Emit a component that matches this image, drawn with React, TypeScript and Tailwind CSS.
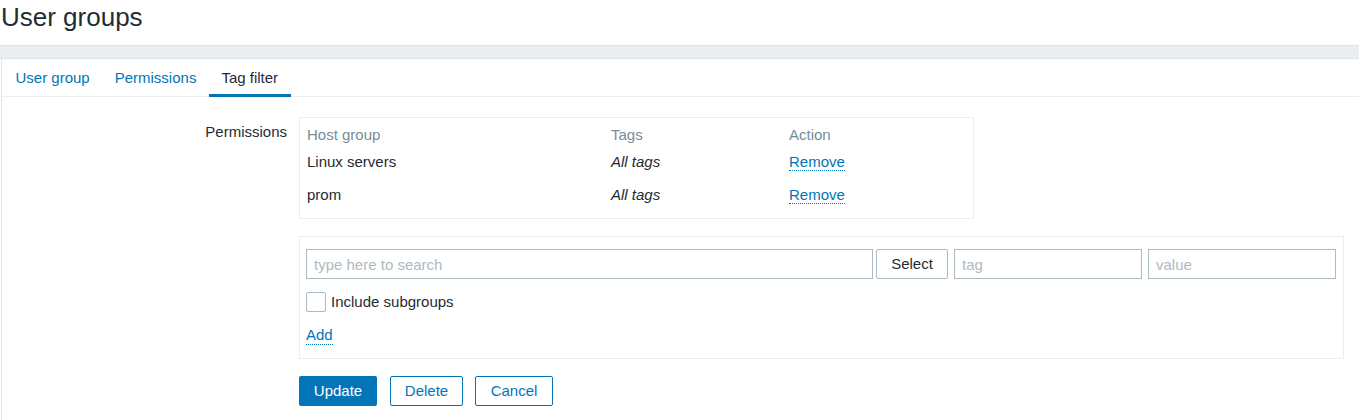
/** User groups: tag filter tab. */

import { useState } from 'react';

const tabs = ['User group', 'Permissions', 'Tag filter'];

const rows = [
  { group: 'Linux servers', tags: 'All tags' },
  { group: 'prom', tags: 'All tags' },
];

function DottedLink({ children }: { children: string }) {
  return (
    <a
      href="#"
      className="text-[#0275b8] border-b border-dotted border-[#0275b8] leading-[18px]"
      onClick={(e) => e.preventDefault()}
    >
      {children}
    </a>
  );
}

export default function App() {
  const [active, setActive] = useState(2);
  const [subgroups, setSubgroups] = useState(false);

  return (
    <div className="min-h-screen bg-white text-[15px] text-[#1f2c33] font-['Liberation_Sans',Arial,sans-serif]">
      <div className="h-[45px]">
        <h1 className="pl-[1px] text-[26px] leading-[34px] font-normal">User groups</h1>
      </div>
      <div className="h-[14px] bg-[#ebeef0] border-y border-[#dfe4e7]" />

      <div className="ml-[1px] border-l border-[#dfe4e7] pb-10">
        <ul className="flex h-[38px] border-b border-[#ebeef0] pl-[1px]">
          {tabs.map((tab, i) => (
            <li
              key={tab}
              onClick={() => setActive(i)}
              className={
                i === active
                  ? 'px-[12.5px] -mb-px flex items-center border-b-[3px] border-[#0275b8] pt-[3px] text-[#1f2c33] cursor-default'
                  : 'px-[12.5px] flex items-center pt-[2px] text-[#0275b8] cursor-pointer'
              }
            >
              {tab}
            </li>
          ))}
        </ul>

        <div className="flex pt-[20px]">
          <div className="w-[286px] shrink-0 pr-[1px] pt-[4px] text-right leading-[22px]">Permissions</div>
          <div className="ml-[11px] flex flex-col">
            <div className="w-[675px] border border-[#ebeef0] pl-[7px] pb-[12px]">
              <div className="flex h-[33px] items-center text-[#768d99] pt-[2px]">
                <div className="w-[304px]">Host group</div>
                <div className="w-[178px]">Tags</div>
                <div>Action</div>
              </div>
              {rows.map((r, i) => (
                <div key={r.group} className={`flex h-[22px] items-center ${i > 0 ? 'mt-[11px]' : ''}`}>
                  <div className="w-[304px]">{r.group}</div>
                  <div className="w-[178px] italic">{r.tags}</div>
                  <div>
                    <DottedLink>Remove</DottedLink>
                  </div>
                </div>
              ))}
            </div>

            <div className="mt-[17px] w-[1045px] border border-[#ebeef0] pl-[6px] pt-[12px] pb-[12px]">
              <div className="flex h-[30px]">
                <input
                  className="w-[567px] h-full border border-[#acbbc2] px-[7px] outline-none placeholder:text-[#acbbc2]"
                  placeholder="type here to search"
                />
                <button className="ml-[3px] w-[72px] h-full border border-[#acbbc2] rounded-[2px] bg-white">
                  Select
                </button>
                <input
                  className="ml-[6px] w-[188px] h-full border border-[#acbbc2] px-[7px] outline-none placeholder:text-[#acbbc2]"
                  placeholder="tag"
                />
                <input
                  className="ml-[6px] w-[188px] h-full border border-[#acbbc2] px-[7px] outline-none placeholder:text-[#acbbc2]"
                  placeholder="value"
                />
              </div>
              <label className="mt-[12px] flex h-[21px] items-center cursor-pointer">
                <span
                  onClick={() => setSubgroups(!subgroups)}
                  className="w-[20px] h-[20px] border border-[#acbbc2] rounded-[2px] bg-white flex items-center justify-center text-[#0275b8] text-[13px]"
                >
                  {subgroups ? '✓' : ''}
                </span>
                <span className="ml-[5px] pt-[2px]">Include subgroups</span>
              </label>
              <div className="mt-[12px] flex h-[22px] items-center">
                <DottedLink>Add</DottedLink>
              </div>
            </div>

            <div className="mt-[17px] flex h-[30px]">
              <button className="w-[78px] rounded-[2px] bg-[#0275b8] text-white">Update</button>
              <button className="ml-[13px] w-[73px] rounded-[2px] border border-[#0275b8] text-[#0275b8] bg-white">
                Delete
              </button>
              <button className="ml-[12px] w-[78px] rounded-[2px] border border-[#0275b8] text-[#0275b8] bg-white">
                Cancel
              </button>
            </div>
          </div>
        </div>
      </div>
    </div>
  );
}
